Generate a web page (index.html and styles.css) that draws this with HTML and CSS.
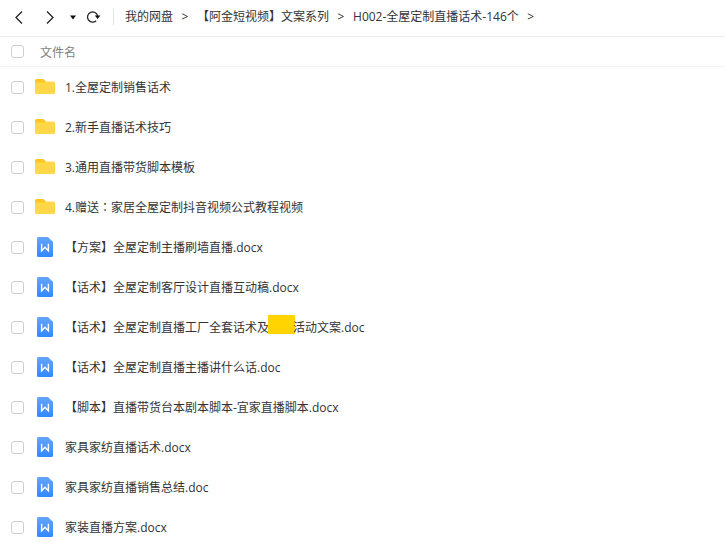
FILE: index.html
```html
<!DOCTYPE html>
<html lang="zh-CN">
<head>
  <meta charset="UTF-8">
  <meta name="viewport" content="width=device-width, initial-scale=1.0">
  <title>我的网盘</title>
  <link rel="stylesheet" href="styles.css">
</head>
<body>
  <header class="toolbar">
    <button class="nav-btn" type="button" aria-label="后退">
      <svg width="20" height="20" viewBox="0 0 20 20"><path d="M13 4.5 7 10.5 13 16.5" /></svg>
    </button>
    <button class="nav-btn" type="button" aria-label="前进">
      <svg width="20" height="20" viewBox="0 0 20 20"><path d="M8 4.5 14 10.5 8 16.5" /></svg>
    </button>
    <button class="nav-btn small" type="button" aria-label="历史记录">
      <svg width="8" height="20" viewBox="0 0 8 20"><path class="solid" d="M1 8.5h6L4 12.5z" /></svg>
    </button>
    <button class="nav-btn" type="button" aria-label="刷新">
      <svg width="20" height="20" viewBox="0 0 20 20"><path d="M13.2 13.7A5.1 5.1 0 1 1 14.6 9" /><path class="solid" d="M11.8 8.5h5.6L14.6 12z" /></svg>
    </button>
    <nav class="crumbs">
      <a href="#">我的网盘</a><span class="sep">&gt;</span>
      <a href="#">【阿金短视频】文案系列</a><span class="sep">&gt;</span>
      <a href="#">H002-全屋定制直播话术-146个</a><span class="sep">&gt;</span>
    </nav>
  </header>

  <main>
    <table class="files">
      <colgroup>
        <col class="col-check">
        <col class="col-icon">
        <col>
      </colgroup>
      <thead>
        <tr>
          <th class="check"><input type="checkbox" id="all" aria-label="全选"></th>
          <th class="title" colspan="2"><label for="all">文件名</label></th>
        </tr>
      </thead>
      <tbody id="list"></tbody>
    </table>
  </main>

  <script src="script.js"></script>
</body>
</html>
```
FILE: styles.css
```css
* { box-sizing: border-box; }
body { margin: 0; background: #fff; color: #333; font: 12px/20px "Open Sans", "Noto Sans CJK SC", sans-serif; }

.toolbar { display: flex; align-items: center; height: 37px; padding: 0 9px 2px; border-bottom: 1px solid #ededed; }
.nav-btn { display: flex; margin: 0 10px 0 0; padding: 0; border: 0; background: none; cursor: pointer; }
.nav-btn.small { margin: 0 6px 0 0; }
.nav-btn svg { fill: none; stroke: #222; stroke-width: 1.3; }
.nav-btn .solid { fill: #111; stroke: none; }

.crumbs { display: flex; height: 16px; align-items: center; padding-left: 11px; border-left: 1px solid #e2e2e2; white-space: nowrap; }
.crumbs a { color: #333; text-decoration: none; }
.sep { width: 24px; text-align: center; }

.files { width: 100%; border-collapse: separate; border-spacing: 0; table-layout: fixed; }
.files th, .files td { padding: 0; text-align: left; font-weight: normal; }
.files th { height: 30px; border-bottom: 1px solid #f3f3f3; color: #808080; }
.files td { height: 40px; }
.col-check { width: 35px; }
.col-icon { width: 30px; }
.files .check { padding-left: 11px; }
.files .title { padding-left: 5px; }
.files svg { display: block; }
.files label { display: block; padding-top: 2px; white-space: nowrap; }
.colon { font-family: "Noto Sans CJK TC", sans-serif; line-height: 1; }

input[type="checkbox"] { display: block; appearance: none; width: 13px; height: 13px; margin: 0; border: 1px solid #cfcfcf; border-radius: 3px; background: #fff; }
input[type="checkbox"]:checked { background: #3b8cff; border-color: #3b8cff; }

.mask { display: inline-block; width: 27px; height: 19px; margin: -4px -2px -4px -1px; background: #ffd400; vertical-align: 2px; }
```
FILE: script.js
```js
const files = [
  { type: "folder", name: "1.全屋定制销售话术" },
  { type: "folder", name: "2.新手直播话术技巧" },
  { type: "folder", name: "3.通用直播带货脚本模板" },
  { type: "folder", name: "4.赠送<span class=\"colon\" lang=\"zh-TW\">：</span>家居全屋定制抖音视频公式教程视频" },
  { type: "doc", name: "【方案】全屋定制主播刷墙直播.docx" },
  { type: "doc", name: "【话术】全屋定制客厅设计直播互动稿.docx" },
  { type: "doc", name: "【话术】全屋定制直播工厂全套话术及<span class=\"mask\"></span>活动文案.doc" },
  { type: "doc", name: "【话术】全屋定制直播主播讲什么话.doc" },
  { type: "doc", name: "【脚本】直播带货台本剧本脚本-宜家直播脚本.docx" },
  { type: "doc", name: "家具家纺直播话术.docx" },
  { type: "doc", name: "家具家纺直播销售总结.doc" },
  { type: "doc", name: "家装直播方案.docx" }
];

const icons = {
  folder: `<svg width="20" height="16" viewBox="0 0 20 16">
    <path fill="#ffc626" d="M0 1.5A1.5 1.5 0 0 1 1.5 0H8.5l2.5 2.5V6H0z"/>
    <path fill="#ffd747" d="M0 3.5h8.5l2-1.1h8A1.5 1.5 0 0 1 20 3.9v9.6a1.5 1.5 0 0 1-1.5 1.5h-17A1.5 1.5 0 0 1 0 13.5z"/>
  </svg>`,
  doc: `<svg width="20" height="20" viewBox="0 0 20 20">
    <defs><linearGradient id="blue" x2="0" y2="1"><stop stop-color="#63a4ff"/><stop offset="1" stop-color="#3189ff"/></linearGradient></defs>
    <path fill="url(#blue)" d="M3.5 0H13l5 5v13.5a1.5 1.5 0 0 1-1.5 1.5h-13A1.5 1.5 0 0 1 2 18.5v-17A1.5 1.5 0 0 1 3.5 0z"/>
    <path fill="none" stroke="#fff" stroke-width="1.4" d="M6.6 6.8v7L10 10.2l3.4 3.6v-7"/>
  </svg>`
};

document.getElementById("list").innerHTML = files.map((f, i) => `
  <tr>
    <td class="check"><input type="checkbox" id="f${i}"></td>
    <td class="icon">${icons[f.type]}</td>
    <td><label for="f${i}">${f.name}</label></td>
  </tr>`).join("");
```
